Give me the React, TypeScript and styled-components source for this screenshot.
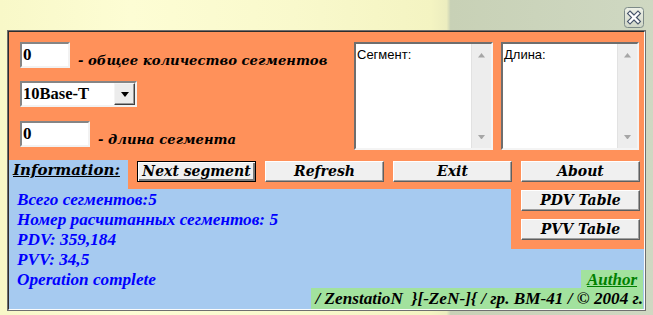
import React from "react";
import styled, { createGlobalStyle } from "styled-components";

const ORANGE = "#ff915a";
const SKY = "#a6caf0";
const MINT = "#a2e29e";

const GlobalStyle = createGlobalStyle`
  html, body {
    margin: 0;
    padding: 0;
    overflow: hidden;
  }
  body {
    font-family: "Liberation Serif", serif;
  }
`;

const Desk = styled.div`
  width: 653px;
  height: 315px;
  overflow: hidden;
  background: linear-gradient(
    90deg,
    #f8f8c8 0%,
    #fdfdd4 20%,
    #f9f9cc 45%,
    #f4f4c2 66%,
    #ecedbf 68.4%,
    #c8d1b6 69%,
    #cfd8c2 100%
  );
`;

const TitleBar = styled.div`
  height: 30px;
  box-sizing: border-box;
  display: flex;
  justify-content: flex-end;
  align-items: flex-start;
  padding: 7px 9px 0 0;
`;

const Frame = styled.div`
  margin-left: 7px;
  width: 639px;
  height: 281px;
  box-sizing: border-box;
  border: 1px solid #6f6f6f;
`;

const Inner = styled.div`
  height: 100%;
  box-sizing: border-box;
  border: 1px solid;
  border-color: #2d2d2d #fcfcfc #fcfcfc #2d2d2d;
  display: flex;
  flex-direction: column;
  background: ${SKY};
`;

const Top = styled.div`
  height: 128px;
  flex: none;
  box-sizing: border-box;
  display: flex;
  gap: 8px;
  padding: 10px 5px 0 11px;
  background: ${ORANGE};
`;

const Controls = styled.div`
  width: 326px;
  display: flex;
  flex-direction: column;
`;

const FieldRow = styled.div<{ $gapTop: number }>`
  display: flex;
  align-items: flex-end;
  gap: 8px;
  margin-top: ${(p) => p.$gapTop}px;
`;

const Field = styled.input<{ $w: number }>`
  width: ${(p) => p.$w}px;
  height: 26px;
  box-sizing: border-box;
  border: 2px solid;
  border-color: #858585 #f2f2f2 #f2f2f2 #858585;
  background: #fff;
  padding: 0 1px;
  margin: 0;
  font: bold 17px "Liberation Serif", serif;
  color: #000;
  outline: none;
`;

const Caption = styled.span`
  font: italic bold 13.2px "DejaVu Serif", serif;
  line-height: 16px;
  margin-bottom: -1px;
  color: #000;
  white-space: nowrap;
`;

const Select = styled.div`
  width: 117px;
  height: 26px;
  box-sizing: border-box;
  border: 2px solid;
  border-color: #858585 #f2f2f2 #f2f2f2 #858585;
  background: #fff;
  display: flex;
  align-items: center;
  justify-content: space-between;
  padding-left: 1px;
  font: bold 16.5px "Liberation Serif", serif;
  color: #000;
`;

const DropButton = styled.div`
  width: 21px;
  height: 22px;
  box-sizing: border-box;
  border: 1px solid;
  border-color: #f4f4f4 #404040 #404040 #f4f4f4;
  box-shadow: inset -1px -1px 0 #9a9a9a;
  background: #ececec;
  display: flex;
  align-items: center;
  justify-content: center;
`;

const ListBox = styled.div<{ $w: number }>`
  width: ${(p) => p.$w}px;
  height: 108px;
  box-sizing: border-box;
  border: 2px solid;
  border-color: #6e6e6e #f4f4f4 #f4f4f4 #6e6e6e;
  background: #fff;
  display: flex;
`;

const ListText = styled.div`
  flex: 1;
  padding: 3px 0 0 1px;
  font: 13px "Liberation Sans", Arial, sans-serif;
  color: #000;
`;

const ScrollTrack = styled.div`
  width: 19px;
  background: #ededed;
  border-left: 1px solid #e2e2e2;
  display: flex;
  flex-direction: column;
  align-items: center;
  justify-content: space-between;
  padding: 9px 0 9px;
`;

const ButtonRow = styled.div`
  height: 29px;
  flex: none;
  display: flex;
`;

const InfoCell = styled.div`
  width: 119px;
  box-sizing: border-box;
  padding: 1px 0 0 4px;
  background: ${SKY};
  font: italic bold 15px "DejaVu Serif", serif;
  line-height: 18px;
  text-decoration: underline;
  color: #000;
`;

const ButtonStrip = styled.div`
  flex: 1;
  display: flex;
  align-items: flex-start;
  gap: 9px;
  padding: 1px 0 0 9px;
  background: ${ORANGE};
`;

const Button = styled.button<{ $default?: boolean }>`
  width: 119px;
  height: 21px;
  box-sizing: border-box;
  margin: 0;
  padding: 0;
  background: #f0f0f0;
  font: italic bold 14px "DejaVu Serif", serif;
  line-height: 17px;
  color: #000;
  text-align: center;
  border: 1px solid;
  border-color: ${(p) => (p.$default ? "#000" : "#fff #5f5f5f #5f5f5f #fff")};
  box-shadow: ${(p) =>
    p.$default
      ? "inset 1px 1px 0 #fff, inset -2px -2px 0 #7a7a7a"
      : "inset -1px -1px 0 #a0a0a0"};
`;

const Middle = styled.div`
  height: 99px;
  flex: none;
  display: grid;
  grid-template-columns: 502px 133px;
`;

const InfoText = styled.div`
  padding: 1px 0 0 8px;
  color: #0000ff;
  font: italic bold 17.2px "Liberation Serif", serif;
  line-height: 20px;
  white-space: nowrap;
`;

const Side = styled.div`
  display: flex;
  flex-direction: column;
`;

const SideBox = styled.div`
  height: 60px;
  box-sizing: border-box;
  display: flex;
  flex-direction: column;
  gap: 8px;
  padding: 1px 0 0 10px;
  background: ${ORANGE};
`;

const AuthorTag = styled.div`
  margin-top: auto;
  align-self: flex-end;
  width: 62px;
  height: 20px;
  margin-right: 1px;
  background: ${MINT};
  color: #008000;
  font: italic bold 17px "Liberation Serif", serif;
  line-height: 20px;
  text-decoration: underline;
  text-align: center;
`;

const FooterRow = styled.div`
  height: 21px;
  flex: none;
  display: flex;
  justify-content: flex-end;
`;

const FooterStrip = styled.div`
  margin-right: 1px;
  padding: 0 0 0 4px;
  background: ${MINT};
  font: italic bold 17.2px "Liberation Serif", serif;
  line-height: 21px;
  color: #000;
  white-space: pre;
`;

const CloseIcon = () => (
  <svg width="20" height="21" viewBox="0 0 20 21">
    <defs>
      <linearGradient id="cb" x1="0" y1="0" x2="0" y2="1">
        <stop offset="0" stopColor="#eef1e8" />
        <stop offset="1" stopColor="#cfd6c6" />
      </linearGradient>
    </defs>
    <rect x="0.5" y="0.5" width="19" height="20" rx="3" fill="url(#cb)" stroke="#7d8a88" />
    <path d="M6 6.5 L14 14.5 M14 6.5 L6 14.5" stroke="#46546a" strokeWidth="4.6" strokeLinecap="square" />
    <path d="M6 6.5 L14 14.5 M14 6.5 L6 14.5" stroke="#fff" strokeWidth="2.4" strokeLinecap="square" />
  </svg>
);

const Arrow = ({ up, color, w }: { up?: boolean; color: string; w: number }) => (
  <svg width={w} height={w / 2 + 1} viewBox={`0 0 ${w} ${w / 2 + 1}`}>
    <polygon
      points={up ? `0,${w / 2 + 1} ${w},${w / 2 + 1} ${w / 2},0` : `0,0 ${w},0 ${w / 2},${w / 2 + 1}`}
      fill={color}
    />
  </svg>
);

const List = ({ w, title }: { w: number; title: string }) => (
  <ListBox $w={w}>
    <ListText>{title}</ListText>
    <ScrollTrack>
      <Arrow up color="#a6a6a6" w={7} />
      <Arrow color="#a6a6a6" w={7} />
    </ScrollTrack>
  </ListBox>
);

export default function App() {
  const info = [
    "Всего сегментов:5",
    "Номер расчитанных сегментов: 5",
    "PDV: 359,184",
    "PVV: 34,5",
    "Operation complete",
  ];

  return (
    <>
      <GlobalStyle />
      <Desk>
        <TitleBar>
          <CloseIcon />
        </TitleBar>
        <Frame>
          <Inner>
            <Top>
              <Controls>
                <FieldRow $gapTop={0}>
                  <Field $w={50} readOnly value="0" />
                  <Caption>- общее количество сегментов</Caption>
                </FieldRow>
                <FieldRow $gapTop={13}>
                  <Select>
                    <span>10Base-T</span>
                    <DropButton>
                      <Arrow color="#000" w={8} />
                    </DropButton>
                  </Select>
                </FieldRow>
                <FieldRow $gapTop={14}>
                  <Field $w={70} readOnly value="0" />
                  <Caption>- длина сегмента</Caption>
                </FieldRow>
              </Controls>
              <List w={139} title="Сегмент:" />
              <List w={138} title="Длина:" />
            </Top>
            <ButtonRow>
              <InfoCell>Information:</InfoCell>
              <ButtonStrip>
                <Button $default>Next segment</Button>
                <Button>Refresh</Button>
                <Button>Exit</Button>
                <Button>About</Button>
              </ButtonStrip>
            </ButtonRow>
            <Middle>
              <InfoText>
                {info.map((line) => (
                  <div key={line}>{line}</div>
                ))}
              </InfoText>
              <Side>
                <SideBox>
                  <Button>PDV Table</Button>
                  <Button>PVV Table</Button>
                </SideBox>
                <AuthorTag>Author</AuthorTag>
              </Side>
            </Middle>
            <FooterRow>
              <FooterStrip>{"/ ZenstatioN  }[-ZeN-]{ / гр. ВМ-41 / © 2004 г."}</FooterStrip>
            </FooterRow>
          </Inner>
        </Frame>
      </Desk>
    </>
  );
}
